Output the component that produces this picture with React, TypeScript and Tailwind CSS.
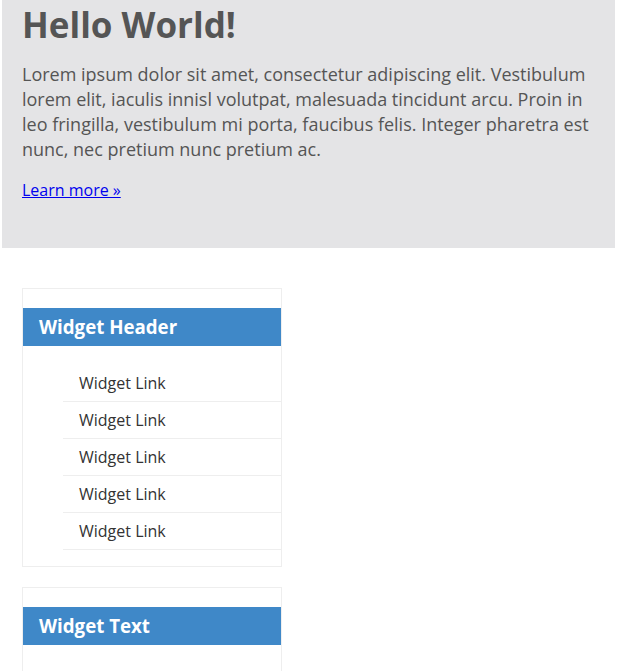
const links = ['Widget Link', 'Widget Link', 'Widget Link', 'Widget Link', 'Widget Link'];

const Widget: React.FC<{ title: string; children?: React.ReactNode }> = ({ title, children }) => (
  <div className="w-[260px] border border-[#eeeeee] pt-[19px] pb-4">
    <h3 className="bg-[#3f88c8] text-white font-bold text-[18.7px] leading-[38px] pl-4">{title}</h3>
    {children}
  </div>
);

export default function App() {
  return (
    <div className="min-h-screen bg-white text-[#555] font-['Open_Sans',sans-serif]">
      {/* Hero */}
      <div className="ml-[2px] w-[613px] h-[248px] bg-[#e4e4e6] px-5 pt-[5px]">
        <h1 className="text-[35px] font-bold leading-[40px] text-[#555]">Hello World!</h1>
        <p className="mt-[17px] text-[18px] leading-[25px]">
          Lorem ipsum dolor sit amet, consectetur adipiscing elit. Vestibulum lorem elit, iaculis innisl volutpat,
          malesuada tincidunt arcu. Proin in leo fringilla, vestibulum mi porta, faucibus felis. Integer pharetra est
          nunc, nec pretium nunc pretium ac.
        </p>
        <a href="#" className="mt-[16px] inline-block text-[16px] leading-[24px] text-[#0000ee] underline">
          Learn more &raquo;
        </a>
      </div>

      {/* Sidebar */}
      <div className="pl-[22px] pt-[40px] flex flex-col gap-5">
        <Widget title="Widget Header">
          <ul className="mt-[19px] ml-10">
            {links.map((l, i) => (
              <li key={i} className="border-b border-[#eeeeee] pl-4 text-[16px] leading-[36px] text-[#333]">
                {l}
              </li>
            ))}
          </ul>
        </Widget>
        <Widget title="Widget Text">
          <div className="h-[40px]" />
        </Widget>
      </div>
    </div>
  );
}
